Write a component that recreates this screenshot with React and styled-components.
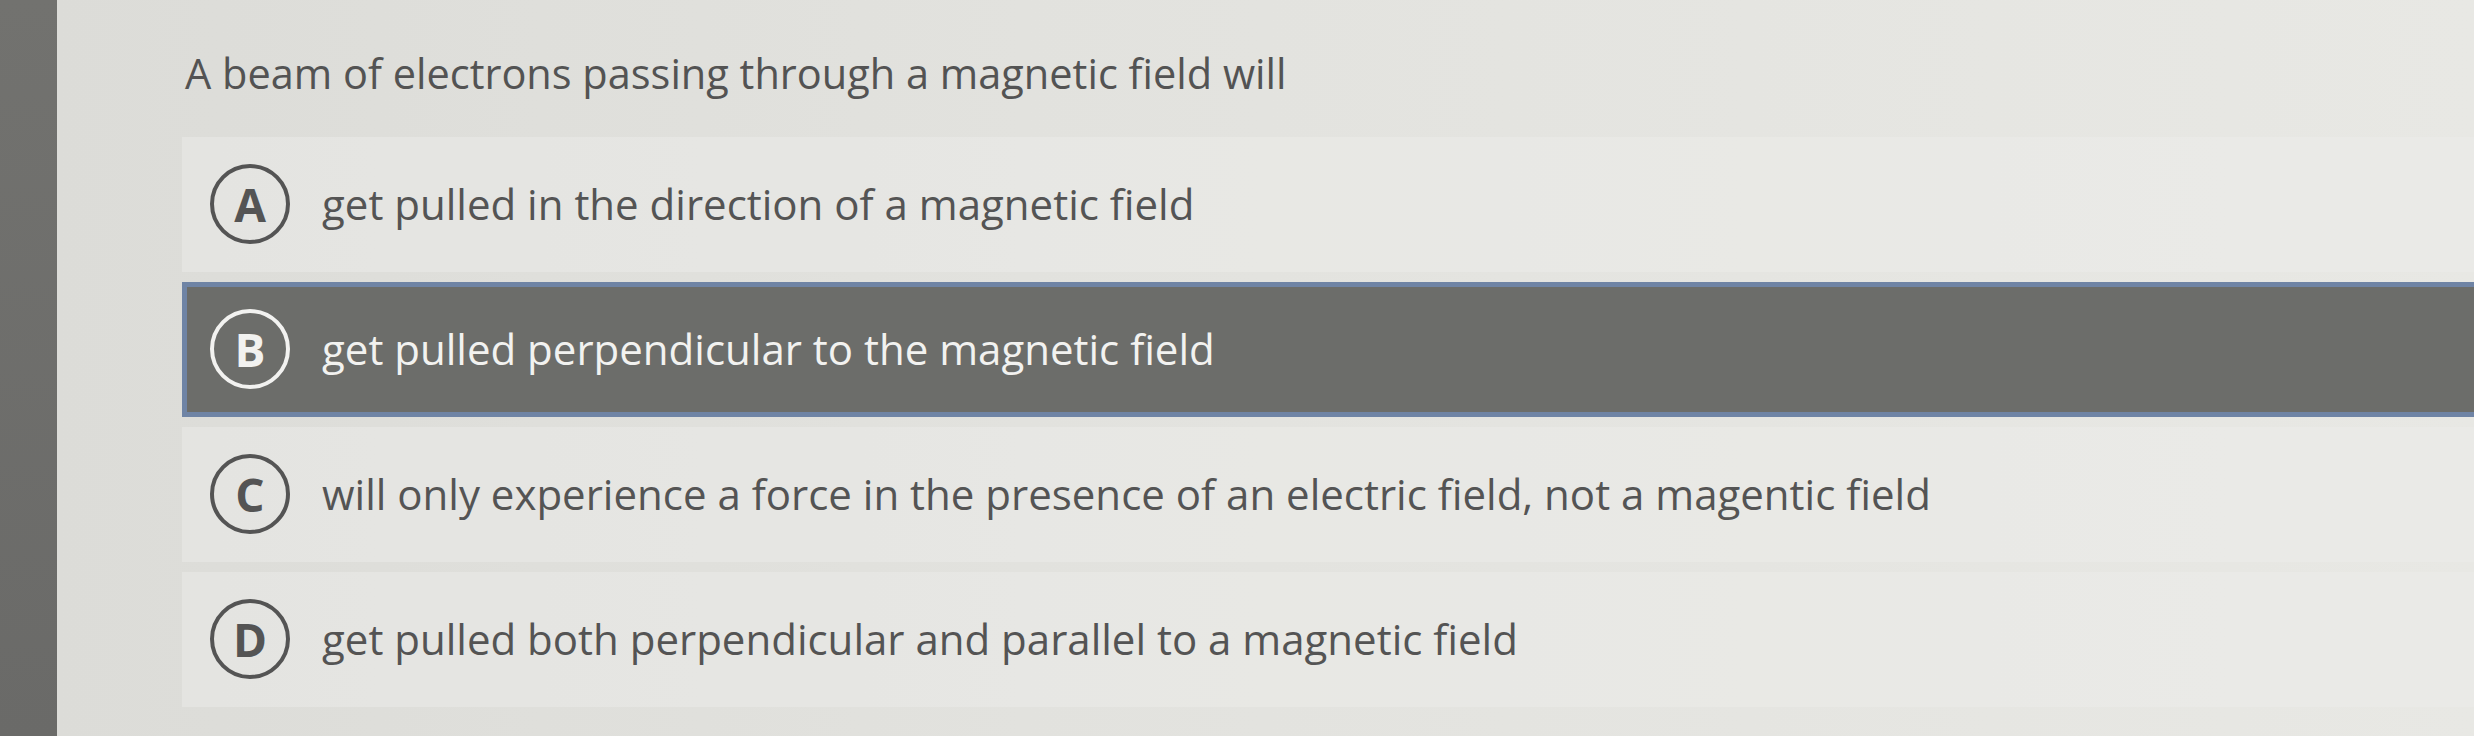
import React from 'react';
import styled, { createGlobalStyle } from 'styled-components';

const GlobalStyle = createGlobalStyle`
    html, body {
        margin: 0;
        padding: 0;
        background: #e0e0dc;
    }
    * {
        box-sizing: border-box;
    }
`;

const Page = styled.div`
    display: flex;
    width: 2474px;
    height: 736px;
    overflow: hidden;
    font-family: "Open Sans", "Noto Sans", sans-serif;
`;

const SideStrip = styled.div`
    width: 57px;
    flex-shrink: 0;
    background: linear-gradient(180deg, #72726f 0%, #6a6a68 100%);
`;

const Main = styled.main`
    flex: 1;
    display: flex;
    flex-direction: column;
    padding-top: 45px;
    padding-left: 125px;
    background: linear-gradient(90deg, #dcdcd8 0%, #e2e2de 40%, #e8e8e4 100%);
`;

const Question = styled.h1`
    margin: 0 0 35px 3px;
    font-size: 41.5px;
    font-weight: 400;
    line-height: 1.362;
    color: #535353;
`;

const Options = styled.div`
    display: flex;
    flex-direction: column;
    gap: 10px;
`;

const Option = styled.div`
    display: flex;
    align-items: center;
    gap: 32px;
    height: 135px;
    padding-left: ${({ selected }) => (selected ? '23px' : '28px')};
    background: ${({ selected }) => (selected ? '#6c6d6a' : 'rgba(238, 238, 234, 0.45)')};
    border: ${({ selected }) => (selected ? '5px solid #6f84a5' : 'none')};
    border-right: none;
    color: ${({ selected }) => (selected ? '#f2f2f0' : '#545454')};
`;

const Letter = styled.span`
    display: flex;
    align-items: center;
    justify-content: center;
    width: 80px;
    height: 80px;
    flex-shrink: 0;
    border-radius: 50%;
    border: 4px solid currentColor;
    font-size: 46px;
    font-weight: 700;
    line-height: 1;
`;

const OptionText = styled.span`
    font-size: 42px;
    line-height: 1.362;
    white-space: nowrap;
`;

const options = [
    { key: 'A', text: 'get pulled in the direction of a magnetic field' },
    { key: 'B', text: 'get pulled perpendicular to the magnetic field', selected: true },
    { key: 'C', text: 'will only experience a force in the presence of an electric field, not a magentic field' },
    { key: 'D', text: 'get pulled both perpendicular and parallel to a magnetic field' },
];

const App = () => {
    return (
        <>
            <GlobalStyle />
            <Page>
                <SideStrip />
                <Main>
                    <Question>A beam of electrons passing through a magnetic field will</Question>
                    <Options>
                        {options.map((opt) => (
                            <Option key={opt.key} selected={opt.selected}>
                                <Letter>{opt.key}</Letter>
                                <OptionText>{opt.text}</OptionText>
                            </Option>
                        ))}
                    </Options>
                </Main>
            </Page>
        </>
    );
};

export default App;
